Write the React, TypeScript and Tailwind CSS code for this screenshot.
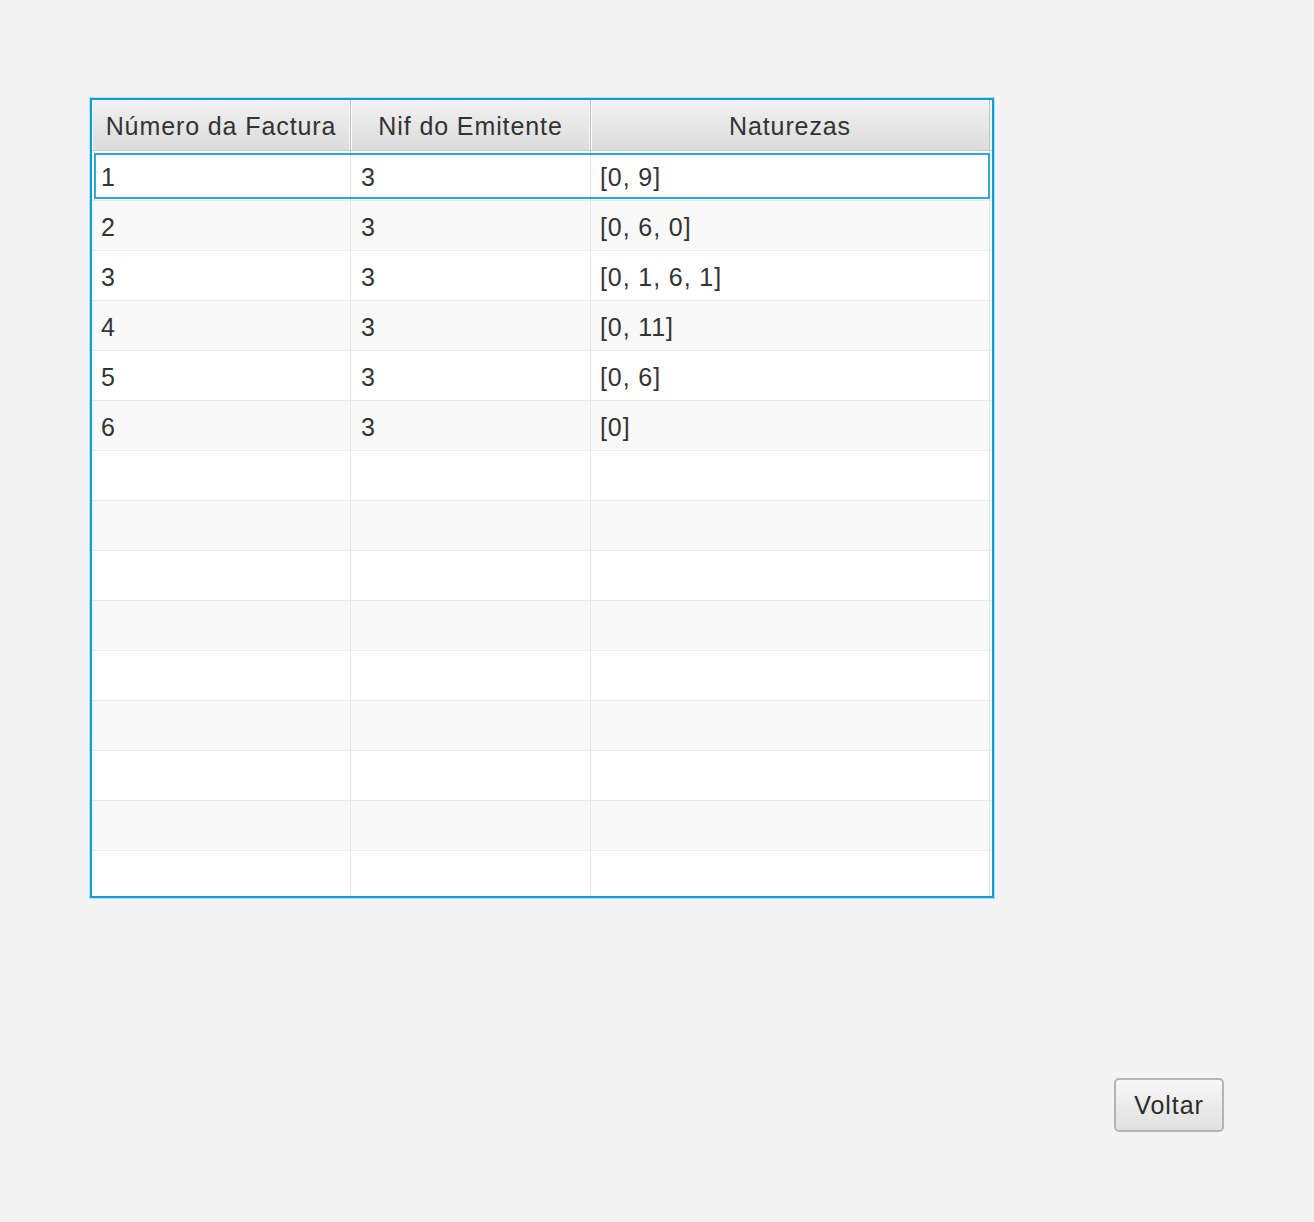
import React from "react";

const rows: [string, string, string][] = [
  ["1", "3", "[0, 9]"],
  ["2", "3", "[0, 6, 0]"],
  ["3", "3", "[0, 1, 6, 1]"],
  ["4", "3", "[0, 11]"],
  ["5", "3", "[0, 6]"],
  ["6", "3", "[0]"],
  ["", "", ""],
  ["", "", ""],
  ["", "", ""],
  ["", "", ""],
  ["", "", ""],
  ["", "", ""],
  ["", "", ""],
  ["", "", ""],
  ["", "", ""],
];

export default function App() {
  return (
    <div
      className="w-[1314px] h-[1222px] bg-[#f4f4f4] relative text-[#333333] tracking-[0.9px]"
      style={{ fontFamily: '"Liberation Sans", Arial, sans-serif' }}
    >
      <div className="pt-[98px] pl-[90px]">
        <div className="w-[904px] h-[800px] border-2 border-[#0a9fd6] shadow-[0_0_0_1px_rgba(10,159,214,0.25)] bg-white overflow-hidden flex flex-col">
          {/* header */}
          <div className="flex h-[51px] shrink-0 border-b border-[#c9c9c9] bg-gradient-to-b from-[#f2f2f2] to-[#dcdcdc] text-[25px]">
            <div className="w-[259px] flex items-center justify-center pt-[4px] border-r border-[#c4c4c4] shadow-[inset_-1px_0_0_#f4f4f4,inset_1px_1px_0_#fafafa]">
              Número da Factura
            </div>
            <div className="w-[240px] flex items-center justify-center pt-[4px] border-r border-[#c4c4c4] shadow-[inset_-1px_0_0_#f4f4f4,inset_1px_1px_0_#fafafa]">
              Nif do Emitente
            </div>
            <div className="w-[399px] flex items-center justify-center pt-[4px] border-r border-[#c4c4c4] shadow-[inset_1px_1px_0_#fafafa]">
              Naturezas
            </div>
            <div className="flex-1 bg-[#f4f4f4]" />
          </div>
          {/* body */}
          {rows.map((r, i) => (
            <div
              key={i}
              className={`relative flex h-[50px] shrink-0 border-b border-[#ebebeb] text-[25px] ${
                i % 2 === 1 ? "bg-[#f9f9f9]" : "bg-white"
              }`}
            >
              <div className="w-[259px] flex items-center pl-[9px] pt-[4px] border-r border-[#e4e4e4]">{r[0]}</div>
              <div className="w-[240px] flex items-center pl-[10px] pt-[4px] border-r border-[#e4e4e4]">{r[1]}</div>
              <div className="w-[399px] flex items-center pl-[9px] pt-[4px] border-r border-[#e4e4e4]">{r[2]}</div>
              {i === 0 && (
                <div className="absolute left-[2px] top-[2px] bottom-[1px] right-[2px] border-2 border-[#2aaad9]" />
              )}
            </div>
          ))}
        </div>
      </div>
      <button className="absolute left-[1114px] top-[1078px] w-[110px] h-[54px] rounded-[5px] border-2 border-[#b4b4b4] bg-gradient-to-b from-[#f7f7f7] to-[#e0e0e0] text-[25px] text-[#2b2b2b] flex items-center justify-center pt-[2px]">
        Voltar
      </button>
    </div>
  );
}
